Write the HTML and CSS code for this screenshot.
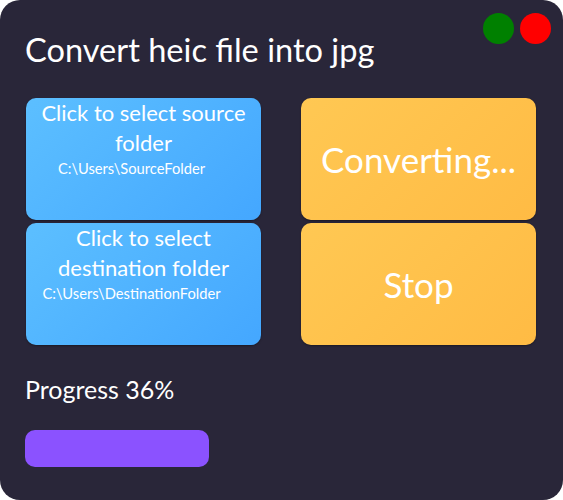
FILE: index.html
```html
<!DOCTYPE html>
<html lang="en">
<head>
<meta charset="utf-8">
<title>HEIC Converter</title>
<link rel="stylesheet" href="styles.css">
</head>
<body>
<div class="window">
  <div class="titlebar">
    <h1 class="title">Convert heic file into jpg</h1>
    <div class="controls">
      <span class="dot dot-green"></span>
      <span class="dot dot-red"></span>
    </div>
  </div>
  <div class="grid">
    <button class="tile tile-blue">
      <span class="tile-label">Click to select source folder</span>
      <span class="tile-path">C:\Users\SourceFolder</span>
    </button>
    <button class="tile tile-orange tile-big">Converting...</button>
    <button class="tile tile-blue">
      <span class="tile-label">Click to select destination folder</span>
      <span class="tile-path">C:\Users\DestinationFolder</span>
    </button>
    <button class="tile tile-orange tile-big">Stop</button>
  </div>
  <div class="progress-label">Progress 36%</div>
  <div class="progress-track">
    <div class="progress-fill" style="width: 36%"></div>
  </div>
</div>
</body>
</html>
```
FILE: styles.css
```css
html, body {
  margin: 0;
  padding: 0;
  background: #ffffff;
}
body {
  font-family: "Lato", "Open Sans", sans-serif;
  color: #ffffff;
}
.window {
  width: 563px;
  height: 500px;
  box-sizing: border-box;
  background: #292639;
  border-radius: 20px;
  padding: 0 12px 0 25px;
  display: flex;
  flex-direction: column;
}
.titlebar {
  display: flex;
  justify-content: space-between;
  align-items: flex-start;
}
.title {
  margin: 28px 0 0 0;
  font-size: 32.6px;
  line-height: 44px;
  font-weight: 400;
}
.controls {
  display: flex;
  gap: 6px;
  margin-top: 13px;
}
.dot {
  width: 31px;
  height: 31px;
  border-radius: 50%;
  display: block;
}
.dot-green { background: #008000; }
.dot-red { background: #ff0000; }
.grid {
  display: grid;
  grid-template-columns: 235px 235px;
  grid-auto-rows: 122px;
  column-gap: 40px;
  row-gap: 3px;
  margin: 26px 0 0 1px;
}
.tile {
  border: none;
  border-radius: 10px;
  font-family: inherit;
  color: #ffffff;
  padding: 0;
  margin: 0;
  display: flex;
  flex-direction: column;
  align-items: center;
  box-shadow: 0 1px 2px rgba(0, 0, 0, 0.35);
  cursor: pointer;
}
.tile-blue {
  background: linear-gradient(135deg, #5cbfff 0%, #44a7ff 100%);
  justify-content: flex-start;
}
.tile-orange {
  background: linear-gradient(135deg, #ffc853 0%, #ffbb44 100%);
  justify-content: center;
}
.tile-big {
  font-size: 35px;
  line-height: 44px;
}
.tile-label {
  display: block;
  font-size: 22px;
  line-height: 30px;
  padding: 0 10px;
}
.tile-path {
  display: block;
  font-size: 14.7px;
  line-height: 20px;
  padding-right: 24px;
}
.progress-label {
  margin-top: 28px;
  font-size: 25px;
  line-height: 32px;
}
.progress-track {
  width: 511px;
  height: 37px;
  margin-top: 25px;
}
.progress-fill {
  height: 100%;
  background: #8b52ff;
  border-radius: 10px;
}
```
